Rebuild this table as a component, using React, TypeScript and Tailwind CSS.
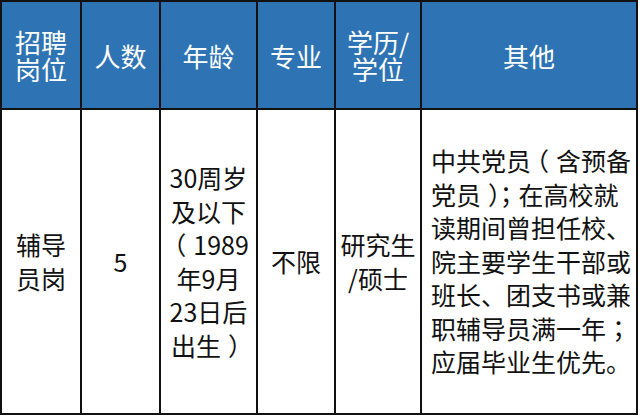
import React from "react";

const font = "font-['Noto_Sans_CJK_SC','Noto_Sans',sans-serif]";

function renderText(s: string) {
  const parts = s.split(/([（）；])/);
  return parts.map((p, i) => {
    if (p === "（")
      return (
        <span key={i} className="relative -left-[7px]">
          {p}
        </span>
      );
    if (p === "）")
      return (
        <span key={i} className="relative left-[7px]">
          {p}
        </span>
      );
    if (p === "；")
      return (
        <span key={i} className="font-['Noto_Sans_CJK_TC','Noto_Sans_CJK_SC',sans-serif]">
          {p}
        </span>
      );
    return <React.Fragment key={i}>{p}</React.Fragment>;
  });
}

function Head({ lines }: { lines: string[] }) {
  return (
    <div className="bg-[#2e74b5] flex flex-col items-center justify-center text-white text-[26px] leading-[27px]">
      {lines.map((l, i) => (
        <div key={i}>{l}</div>
      ))}
    </div>
  );
}

function Cell({ lines, align = "center" }: { lines: string[]; align?: "center" | "left" }) {
  return (
    <div
      className={
        "bg-white flex flex-col justify-center text-[#111] text-[25px] leading-[33.5px] " +
        (align === "center" ? "items-center text-center" : "items-start pl-[9px]")
      }
    >
      {lines.map((l, i) => (
        <div key={i} className="whitespace-nowrap">{renderText(l)}</div>
      ))}
    </div>
  );
}

export default function App() {
  return (
    <div className={"w-[640px] h-[417px] bg-white " + font}>
      <div className="w-[638px] grid grid-cols-[78px_77px_95px_76px_84px_214px] grid-rows-[106px_303px] gap-[2px] p-[2px] bg-[#111]">
        <Head lines={["招聘", "岗位"]} />
        <Head lines={["人数"]} />
        <Head lines={["年龄"]} />
        <Head lines={["专业"]} />
        <Head lines={["学历/", "学位"]} />
        <Head lines={["其他"]} />
        <Cell lines={["辅导", "员岗"]} />
        <Cell lines={["5"]} />
        <Cell lines={["30周岁", "及以下", "（1989", "年9月", "23日后", "出生）"]} />
        <Cell lines={["不限"]} />
        <Cell lines={["研究生", "/硕士"]} />
        <Cell
          align="left"
          lines={[
            "中共党员（含预备",
            "党员）；在高校就",
            "读期间曾担任校、",
            "院主要学生干部或",
            "班长、团支书或兼",
            "职辅导员满一年；",
            "应届毕业生优先。",
          ]}
        />
      </div>
    </div>
  );
}
